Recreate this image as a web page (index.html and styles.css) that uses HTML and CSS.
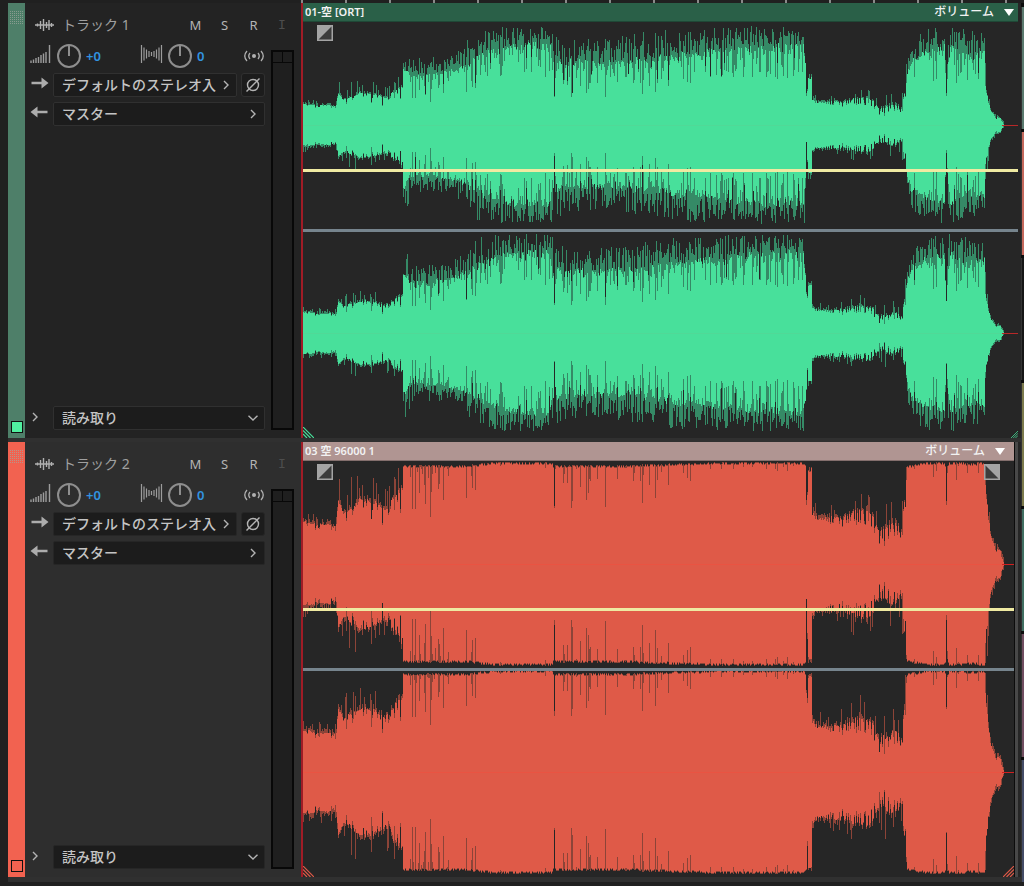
FILE: index.html
```html
<!DOCTYPE html>
<html lang="ja">
<head>
<meta charset="utf-8">
<title>マルチトラック</title>
<link rel="stylesheet" href="styles.css">
</head>
<body>
<svg class="defs" aria-hidden="true">
  <symbol id="i-wave" viewBox="0 0 19 12"><path d="M0 6h19M2.500 4.500v3M5.500 2v8M8.500 0v12M11.500 3v6M14 1v10M16.500 4v4" stroke="currentColor" stroke-width="1.400" fill="none"/></symbol>
  <symbol id="i-vol" viewBox="0 0 22 18"><path d="M1 15.500V18M3.500 14.500V18M6 13V18M8.500 12V18M11 10V18M13.500 8.500V18M16 7V18M19.500 0V18" stroke="currentColor" stroke-width="1.400" fill="none"/></symbol>
  <symbol id="i-pan" viewBox="0 0 23 18"><path d="M1.500 0v18M4 2.500v13M6.500 4.500v9M9 6v6M11.500 7v4M14 6v6M16.500 4.500v9M19 2.500v13M21.500 0v18" stroke="currentColor" stroke-width="1.200" fill="none"/></symbol>
  <symbol id="i-cast" viewBox="0 0 22 12"><circle cx="11" cy="6" r="2" fill="currentColor"/><path d="M7 3Q4.500 6 7 9M15 3Q17.500 6 15 9M4 1Q-.5 6 4 11M18 1Q22.500 6 18 11" stroke="currentColor" stroke-width="1.300" fill="none"/></symbol>
  <symbol id="i-in" viewBox="0 0 18 12"><path d="M1 4.800h10V.5L18 6l-7 5.500V7.200H1z" fill="currentColor"/></symbol>
  <symbol id="i-out" viewBox="0 0 18 12"><path d="M17 4.800H7V.5L0 6l7 5.500V7.200h10z" fill="currentColor"/></symbol>
  <symbol id="i-right" viewBox="0 0 6 10"><path d="M1 1l4 4-4 4" stroke="currentColor" stroke-width="1.400" fill="none"/></symbol>
  <symbol id="i-down" viewBox="0 0 10 6"><path d="M.5.700L5 5 9.500.700" stroke="currentColor" stroke-width="1.400" fill="none"/></symbol>
  <symbol id="i-phase" viewBox="0 0 16 16"><circle cx="8" cy="8" r="5.500" stroke="currentColor" stroke-width="1.400" fill="none"/><path d="M1.500 14.500l13-13" stroke="currentColor" stroke-width="1.400"/></symbol>
  <symbol id="i-fade" viewBox="0 0 16 16"><path d="M0 0h16v16H0z" fill="#a4a4a4"/><path d="M14.500 1.500v13h-13z" fill="#3c3c3c"/></symbol>
  <symbol id="i-hatch" viewBox="0 0 11 11"><path d="M0 0l11 11M0 3.500l7.500 7.500M0 7l4 4" stroke="currentColor" stroke-width="1.200"/></symbol>
</svg>

<div class="ruler"></div>
<div class="workspace">
  <main class="tracks">
    <section class="track green" aria-label="トラック 1">
      <div class="strip"><span class="grip"></span><span class="swatch"></span></div>
      <div class="panel">
        <header class="head">
          <svg class="wave-icon"><use href="#i-wave"/></svg>
          <h2 class="name">トラック 1</h2>
          <button class="flag">M</button><button class="flag">S</button><button class="flag">R</button><button class="flag" disabled>I</button>
        </header>
        <div class="body">
          <div class="controls">
            <div class="knobs">
              <svg class="vol"><use href="#i-vol"/></svg>
              <input class="knob" type="range" aria-label="音量"><output class="value">+0</output>
              <svg class="pan"><use href="#i-pan"/></svg>
              <input class="knob" type="range" aria-label="パン"><output class="value">0</output>
              <svg class="cast"><use href="#i-cast"/></svg>
            </div>
            <div class="row input-row">
              <svg class="arrow"><use href="#i-in"/></svg>
              <button class="box"><span class="label">デフォルトのステレオ入</span><svg class="chev"><use href="#i-right"/></svg></button>
              <button class="phase" aria-label="位相反転"><svg class="phase-icon"><use href="#i-phase"/></svg></button>
            </div>
            <div class="row output-row">
              <svg class="arrow"><use href="#i-out"/></svg>
              <button class="box"><span class="label">マスター</span><svg class="chev"><use href="#i-right"/></svg></button>
            </div>
            <div class="row mode-row">
              <button class="expand" aria-label="展開"><svg class="chev"><use href="#i-right"/></svg></button>
              <div class="box"><select class="mode" aria-label="オートメーションモード"><option>読み取り</option></select><svg class="chev-down"><use href="#i-down"/></svg></div>
            </div>
          </div>
          <div class="meter"><span class="clip-led"></span><span class="clip-led"></span></div>
        </div>
      </div>
      <div class="lane">
        <article class="clip">
          <header class="clip-head"><span class="clip-name">01-空 [ORT]</span><button class="clip-menu">ボリューム<span class="tri"></span></button></header>
          <div class="clip-body">
            <svg class="waveform" data-gain="1" data-width="715" viewBox="0 0 715 416" preserveAspectRatio="none" shape-rendering="crispEdges"></svg>
            <svg class="fade fade-in"><use href="#i-fade"/></svg>
            <svg class="hatch hatch-left"><use href="#i-hatch"/></svg>
            <svg class="hatch hatch-right"><use href="#i-hatch"/></svg>
          </div>
        </article>
      </div>
    </section>

    <section class="track red" aria-label="トラック 2">
      <div class="strip"><span class="grip"></span><span class="swatch"></span></div>
      <div class="panel">
        <header class="head">
          <svg class="wave-icon"><use href="#i-wave"/></svg>
          <h2 class="name">トラック 2</h2>
          <button class="flag">M</button><button class="flag">S</button><button class="flag">R</button><button class="flag" disabled>I</button>
        </header>
        <div class="body">
          <div class="controls">
            <div class="knobs">
              <svg class="vol"><use href="#i-vol"/></svg>
              <input class="knob" type="range" aria-label="音量"><output class="value">+0</output>
              <svg class="pan"><use href="#i-pan"/></svg>
              <input class="knob" type="range" aria-label="パン"><output class="value">0</output>
              <svg class="cast"><use href="#i-cast"/></svg>
            </div>
            <div class="row input-row">
              <svg class="arrow"><use href="#i-in"/></svg>
              <button class="box"><span class="label">デフォルトのステレオ入</span><svg class="chev"><use href="#i-right"/></svg></button>
              <button class="phase" aria-label="位相反転"><svg class="phase-icon"><use href="#i-phase"/></svg></button>
            </div>
            <div class="row output-row">
              <svg class="arrow"><use href="#i-out"/></svg>
              <button class="box"><span class="label">マスター</span><svg class="chev"><use href="#i-right"/></svg></button>
            </div>
            <div class="row mode-row">
              <button class="expand" aria-label="展開"><svg class="chev"><use href="#i-right"/></svg></button>
              <div class="box"><select class="mode" aria-label="オートメーションモード"><option>読み取り</option></select><svg class="chev-down"><use href="#i-down"/></svg></div>
            </div>
          </div>
          <div class="meter"><span class="clip-led"></span><span class="clip-led"></span></div>
        </div>
      </div>
      <div class="lane">
        <article class="clip">
          <header class="clip-head"><span class="clip-name">03 空 96000 1</span><button class="clip-menu">ボリューム<span class="tri"></span></button></header>
          <div class="clip-body">
            <svg class="waveform" data-gain="2" data-width="711" viewBox="0 0 711 416" preserveAspectRatio="none" shape-rendering="crispEdges"></svg>
            <svg class="fade fade-in"><use href="#i-fade"/></svg>
            <svg class="fade fade-out"><use href="#i-fade"/></svg>
            <svg class="hatch hatch-left"><use href="#i-hatch"/></svg>
            <svg class="hatch hatch-right"><use href="#i-hatch"/></svg>
          </div>
        </article>
      </div>
    </section>
  </main>
  <aside class="overview"><i class="o1"></i><i class="o2"></i><i class="o3"></i><i class="o4"></i><i class="o5"></i><i class="o6"></i><i class="o7"></i></aside>
</div>
<script src="wave.js"></script>
</body>
</html>
```
FILE: styles.css
```css
* { box-sizing: border-box; }
body {
  margin: 0;
  min-height: 100vh;
  display: flex;
  flex-direction: column;
  background: #202020;
  color: #c4c4c4;
  font-family: "Noto Sans", "Noto Sans CJK JP", sans-serif;
}
svg { display: block; flex: none; }
button, select, input { font: inherit; color: inherit; margin: 0; padding: 0; border: 0; background: none; }
.defs { position: absolute; width: 0; height: 0; }

.ruler {
  height: 3px;
  margin-left: 301px;
  background: repeating-linear-gradient(90deg, #8a8a8a 0 2px, transparent 2px 44px) #202020;
}
.workspace { flex: 1; display: flex; padding-bottom: 4px; }
.tracks {
  flex: 1;
  min-width: 0;
  display: flex;
  flex-direction: column;
  gap: 4px;
  margin-left: 8px;
  padding-bottom: 5px;
  background: #303030;
}
.track { flex: 1; display: flex; }
.green { --tone: #4e7f69; --swatch: #50f0a0; --panel: #232323; --box-line: #303030; --head: #2a6048; --wave: #48e09b; --dim: #358a66; --zero: #b82828; --mid: #50d997; }
.red { --tone: #f26250; --swatch: #f26250; --panel: #2e2e2e; --box-line: #262626; --head: #b09592; --wave: #df5a48; --dim: #8c4438; --zero: #d02020; --mid: #ea5342; }

.strip {
  width: 17px;
  padding: 8px 2px 5px;
  display: flex;
  flex-direction: column;
  justify-content: space-between;
  align-items: center;
  background: var(--tone);
}
.grip {
  width: 13px;
  height: 13px;
  background: repeating-linear-gradient(90deg, transparent 0 1px, var(--tone) 1px 2px), repeating-linear-gradient(#a0a8a0 0 1px, transparent 1px 2px);
  opacity: .7;
}
.swatch { width: 12px; height: 12px; border: 1px solid #101010; background: var(--swatch); }

.panel { width: 276px; display: flex; flex-direction: column; padding: 0 7px 8px 5px; background: var(--panel); }
.head { height: 39px; padding: 5px 0 0 5px; display: flex; align-items: center; }
.wave-icon { width: 19px; height: 12px; color: #b0b0b0; margin-right: 8px; }
.name { flex: 1; margin: 0; font-size: 14px; line-height: 20px; font-weight: 400; color: #a0a0a0; white-space: nowrap; }
.flag { width: 29px; height: 20px; font-size: 13px; line-height: 20px; text-align: center; color: #b4b4b4; }
.flag:disabled { width: 24px; margin: 0 0 0 2px; color: #4d4d4d; font-family: "DejaVu Sans Mono", monospace; }
.body { flex: 1; display: flex; gap: 6px; }
.controls { flex: 1; min-width: 0; display: flex; flex-direction: column; }

.knobs { height: 28px; display: grid; grid-template-columns: 22px 24px 49px 23px 24px 1fr 22px; column-gap: 5px; align-items: center; color: #9c9c9c; }
.vol { width: 22px; height: 18px; margin-bottom: 4px; }
.pan { width: 23px; height: 18px; margin-bottom: 4px; }
.cast { width: 22px; height: 12px; color: #b0b0b0; }
.knob {
  appearance: none;
  width: 24px;
  height: 24px;
  border: 2px solid #8e8e8e;
  border-radius: 50%;
  background: linear-gradient(#8e8e8e, #8e8e8e) center top / 2px 10px no-repeat;
}
.knob::-webkit-slider-thumb { appearance: none; width: 0; height: 0; }
.value { font-size: 13px; line-height: 20px; font-weight: 600; color: #3193e0; }

.row { display: flex; gap: 4px; align-items: center; }
.input-row { margin-top: 3px; }
.output-row { margin-top: 5px; }
.mode-row { margin-top: auto; }
.arrow { width: 19px; height: 12px; color: #acacac; margin-bottom: 4px; }
.box {
  flex: 1;
  min-width: 0;
  height: 24px;
  padding: 0 8px;
  display: flex;
  align-items: center;
  gap: 7px;
  border: 1px solid var(--box-line);
  border-radius: 2px;
  background: #1c1c1c;
  text-align: left;
}
.label { flex: 1; white-space: nowrap; font-size: 14px; line-height: 20px; font-weight: 500; }
.chev { width: 6px; height: 10px; color: #b4b4b4; }
.chev-down { width: 10px; height: 6px; margin-right: -2px; color: #b4b4b4; }
.input-row .box { padding-right: 7px; gap: 5px; }
.phase { width: 24px; height: 24px; display: grid; place-items: center; border: 1px solid var(--box-line); border-radius: 3px; background: #1c1c1c; color: #b4b4b4; }
.phase-icon { width: 16px; height: 16px; }
.expand { width: 19px; height: 24px; padding: 0 0 3px 2px; display: flex; align-items: center; }
.mode { appearance: none; flex: 1; min-width: 0; font-size: 14px; line-height: 20px; font-weight: 500; }

.meter {
  width: 23px;
  margin-top: 8px;
  display: grid;
  grid-template: 11px 1fr / 1fr 1fr;
  column-gap: 1px;
  border: 2px solid #080808;
  background: linear-gradient(#080808, #080808) center top / 1px 11px no-repeat #1f1f1f;
}
.clip-led { border-bottom: 1px solid #080808; }

.lane { flex: 1; min-width: 0; display: flex; padding-right: 3px; border-left: 2px solid #a01c26; background: #262626; }
.clip { flex: 1; min-width: 0; display: flex; flex-direction: column; }
.red .clip { border-right: 1px solid #0c0c0c; box-shadow: 3px 0 0 #484848; margin-right: 3px; }
.clip-head {
  height: 19px;
  padding: 0 4px 0 2px;
  display: flex;
  align-items: center;
  justify-content: space-between;
  border-bottom: 1px solid rgba(0, 0, 0, .25);
  background: var(--head);
  color: #f2f2f2;
}
.red .clip-head { padding-right: 9px; }
.clip-name { font-size: 11px; line-height: 18px; font-weight: 600; }
.clip-menu { display: flex; align-items: center; gap: 10px; font-size: 12px; line-height: 18px; font-weight: 500; }
.tri { border: 5px solid transparent; border-top: 7px solid #fff; border-bottom: 0; }
.clip-body { flex: 1; position: relative; display: flex; }
.waveform { flex: 1; width: 0; min-width: 0; height: auto; }
.w-dim { fill: var(--dim); }
.w-solid { fill: var(--wave); }
.w-zero { fill: var(--zero); }
.w-mid { fill: var(--mid); }
.w-split { fill: #76848d; }
.w-volume { fill: #efeaa2; }
.fade { position: absolute; top: 3px; width: 16px; height: 16px; }
.fade-in { left: 14px; }
.fade-out { right: 14px; transform: scaleX(-1); }
.hatch { position: absolute; bottom: 0; width: 11px; height: 11px; color: var(--wave); }
.hatch-left { left: 0; }
.hatch-right { right: 0; transform: scaleX(-1); }
.green .hatch-right { width: 7px; height: 7px; }

.overview { width: 3px; display: flex; flex-direction: column; gap: 3px; padding-top: 4px; background: #0c0c0c; }
.overview i { flex: 1; border-left: 1px solid #333; }
.o1 { background: #5b7a6f; }
.o2 { background: #c4685c; }
.o3 { background: #161616; }
.o4 { background: #7c7a4c; }
.o5 { background: #416f62; }
.o6 { background: #704e60; }
.o7 { background: #444c66; }
```
FILE: wave.js
```js
// Envelope of the recording: [x, lowest body, usual body, highest peak]
const ENV = [
  [0, 19, 21, 26], [12, 17, 20, 23], [33, 16, 20, 24], [35, 27, 33, 40], [40, 20, 26, 34],
  [50, 22, 30, 42], [58, 24, 33, 40], [70, 22, 32, 40], [82, 18, 28, 35], [90, 22, 34, 45],
  [99, 24, 40, 52], [100, 45, 60, 86], [104, 40, 56, 84], [108, 24, 52, 68], [125, 20, 52, 68], [145, 28, 56, 68],
  [158, 30, 60, 80], [175, 38, 70, 96], [200, 44, 80, 99], [235, 50, 84, 99], [249, 46, 82, 98],
  [251, 26, 44, 84], [254, 28, 66, 92], [270, 28, 65, 88], [300, 28, 64, 86], [335, 28, 66, 92], [365, 36, 70, 96],
  [400, 40, 74, 98], [425, 44, 77, 99], [455, 46, 82, 99], [500, 44, 82, 99], [502, 46, 60, 98],
  [503, 28, 30, 99], [505, 40, 48, 54], [508, 40, 48, 54], [509, 23, 26, 30], [515, 19, 23, 28], [540, 18, 24, 29],
  [560, 20, 28, 37], [568, 18, 26, 33], [575, 10, 18, 25], [582, 8, 18, 32], [590, 12, 21, 29],
  [598, 9, 18, 26], [601, 24, 32, 44], [606, 44, 64, 80], [620, 44, 74, 98], [641, 42, 80, 99],
  [643, 24, 30, 60], [646, 42, 82, 99], [665, 34, 72, 96], [681, 40, 76, 92], [683, 28, 34, 50],
  [687, 12, 15, 18], [692, 6, 8, 10], [697, 5, 7, 9], [700, 0, 1, 1], [701, 0, 0, 0], [760, 0, 0, 0]
];

function random(seed) {
  let s = seed;
  return () => {
    s = (s + 0x6d2b79f5) | 0;
    let t = Math.imul(s ^ (s >>> 15), 1 | s);
    t = (t + Math.imul(t ^ (t >>> 7), 61 | t)) ^ t;
    return ((t ^ (t >>> 14)) >>> 0) / 4294967296;
  };
}

function envelope(x) {
  let i = 0;
  while (ENV[i + 1][0] <= x) i++;
  const a = ENV[i], b = ENV[i + 1], t = (x - a[0]) / (b[0] - a[0]);
  return [1, 2, 3].map(k => a[k] + (b[k] - a[k]) * t);
}

function columns(gain, width, seed) {
  const shared = random(71), own = random(seed), solid = [], dim = [];
  let swell = 0.5;
  for (let x = 0; x < width; x++) {
    const [lo, mid, hi] = envelope(x);
    const dip = shared(), depth = shared(), r = own(), p = own(), q = own(), e = own();
    if (x > 700) { solid.push(0); dim.push(0); continue; }
    swell = swell * 0.6 + r * 0.4;
    const quiet = mid < 45;
    let s = mid + (hi - mid) * 0.9 * (swell - 0.45) - (mid - lo) * 0.4 * r * r;
    if (dip < 0.38) s = Math.min(s, lo + (mid - lo) * (depth * 0.9));
    let d = mid + (hi - mid) * (p < 0.4 ? 0.4 + 0.6 * q : q * 0.5);
    if (p > 0.75) d = s + (mid - s) * q;
    if (quiet) d = p < 0.16 ? hi * (0.9 + 0.2 * q) : s + 3 * q;
    // Full-scale columns flatten against the top of the channel.
    const limit = gain > 1
      ? 102 - Math.floor(e * 3) - Math.max(0, Math.min(3, Math.round((76 - mid) / 4)))
      : 99 - Math.floor(e * 3);
    if (gain > 1 && mid > 48) d = Math.max(d, 50);
    solid.push(Math.round(Math.min(s * gain, limit - 1)));
    dim.push(Math.round(Math.min(Math.max(d, s) * gain, limit)));
  }
  return { solid, dim };
}

function area(up, down, cy) {
  let d = `M0 ${cy}`;
  up.forEach((h, x) => { d += `V${cy - h}H${x + 1}`; });
  for (let x = down.length - 1; x >= 0; x--) d += `V${cy + down[x]}H${x}`;
  return d + 'Z';
}

document.querySelectorAll('.waveform').forEach(svg => {
  const gain = +svg.dataset.gain, width = +svg.dataset.width;
  const rect = (cls, y, h) => `<rect class="${cls}" x="0" y="${y}" width="${width}" height="${h}"/>`;
  let out = '';
  [103, 311].forEach((cy, n) => {
    const up = columns(gain, width, 11 + n * 40);
    const down = columns(gain, width, 23 + n * 40);
    out += `<path class="w-dim" d="${area(up.dim, down.dim, cy)}"/>`;
    out += `<path class="w-solid" d="${area(up.solid, down.solid, cy)}"/>`;
    out += rect('w-zero', cy, 1);
    out += `<rect class="w-mid" x="0" y="${cy}" width="699" height="1"/>`;
  });
  out += rect('w-split', 207, 3) + rect('w-volume', 147, 3);
  svg.innerHTML = out;
});
```
